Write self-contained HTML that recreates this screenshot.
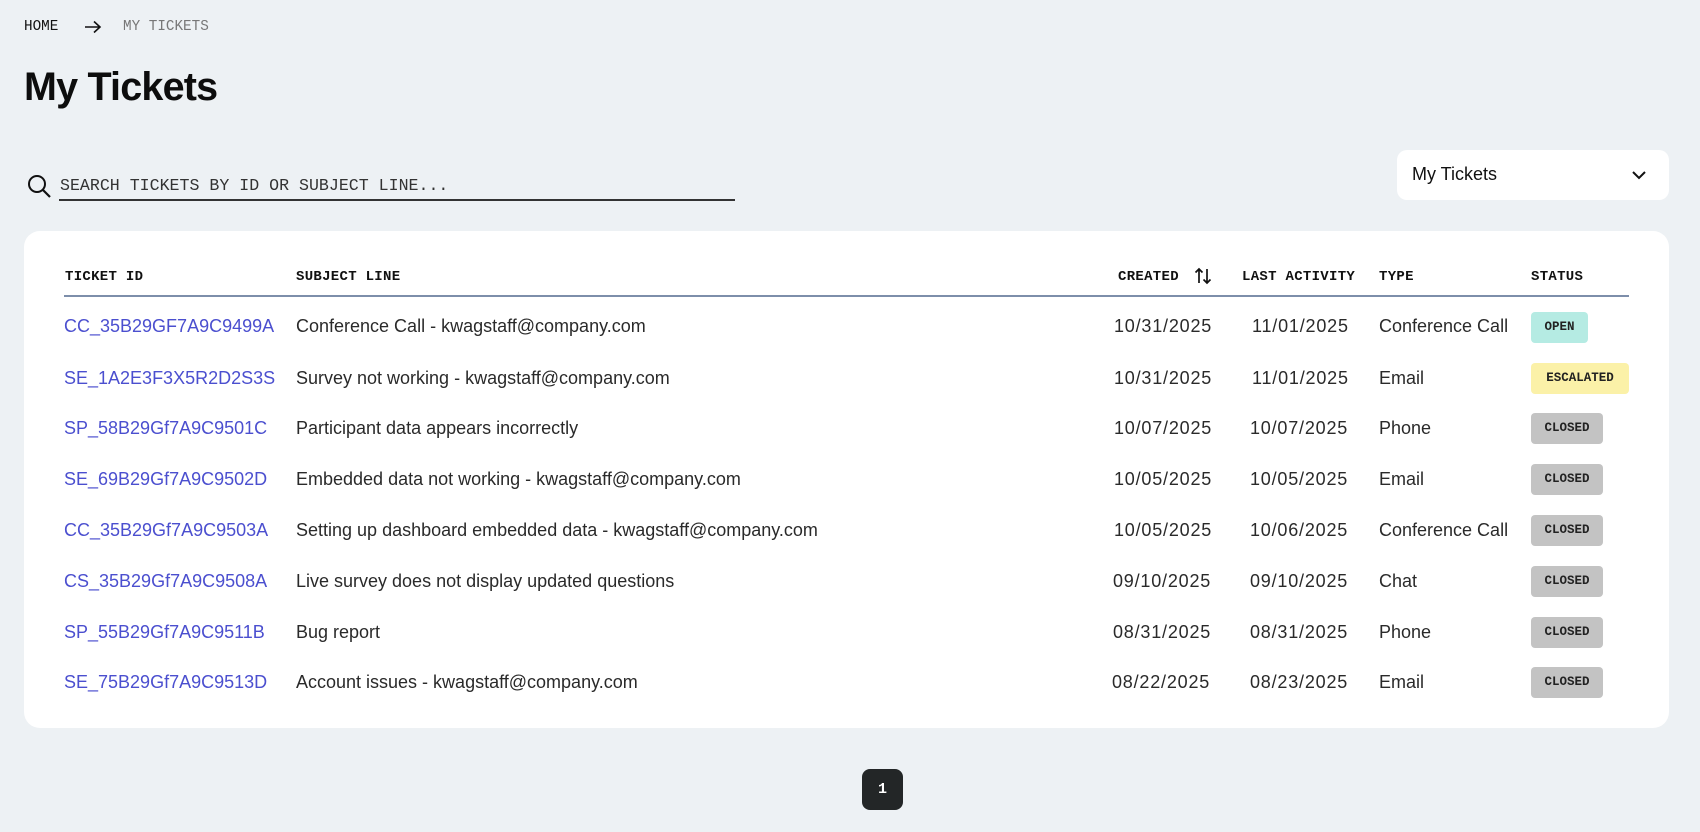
<!DOCTYPE html>
<html><head><meta charset="utf-8"><style>
*{margin:0;padding:0;box-sizing:border-box}
body{width:1700px;height:832px;background:#edf1f4;font-family:"Liberation Sans",sans-serif;color:#222;position:relative;overflow:hidden}
.a{position:absolute;white-space:nowrap}
.mono{font-family:"Liberation Mono",monospace}
.bc{top:19px;font-size:14.3px}
h1{position:absolute;left:24px;top:65px;font-size:39.5px;font-weight:bold;letter-spacing:-0.8px;color:#0d0d0d}
.card{position:absolute;left:24px;top:231px;width:1645px;height:497px;background:#fff;border-radius:16px}
.hd{top:269px;font-family:"Liberation Mono",monospace;font-weight:bold;font-size:14px;color:#111;letter-spacing:.3px}
.line{position:absolute;left:64px;top:295px;width:1565px;height:2px;background:#7d8eaa}
.r{font-size:18px;color:#2a2a2a}
.d{letter-spacing:0.8px}
.id{color:#4b4fcf}
.b{position:absolute;left:1531px;height:31px;border-radius:4px;font-family:"Liberation Mono",monospace;font-weight:bold;font-size:12.5px;line-height:31px;text-align:center;color:#222}
.dd{position:absolute;left:1397px;top:150px;width:272px;height:50px;background:#fff;border-radius:10px}
</style></head><body>
<div class="a mono bc" style="left:24px;color:#111">HOME</div>
<svg class="a" style="left:84px;top:20px" width="18" height="14" viewBox="0 0 18 14"><path d="M1 7H16M10 1.5L16 7L10 12.5" fill="none" stroke="#111" stroke-width="1.6"/></svg>
<div class="a mono bc" style="left:123px;color:#777">MY TICKETS</div>
<h1>My Tickets</h1>
<svg class="a" style="left:27px;top:174px" width="25" height="25" viewBox="0 0 25 25"><circle cx="10" cy="10" r="8" fill="none" stroke="#111" stroke-width="2"/><path d="M16 16L23 23" stroke="#111" stroke-width="2.2"/></svg>
<div class="a mono" style="left:60px;top:176px;font-size:16.6px;color:#333">SEARCH TICKETS BY ID OR SUBJECT LINE...</div>
<div class="a" style="left:59px;top:199px;width:676px;height:2px;background:#333"></div>
<div class="dd"></div>
<div class="a" style="left:1412px;top:164px;font-size:18px;color:#111">My Tickets</div>
<svg class="a" style="left:1631px;top:170px" width="16" height="10" viewBox="0 0 16 10"><path d="M2 2L8 8L14 2" fill="none" stroke="#111" stroke-width="2"/></svg>
<div class="card"></div>
<div class="a hd" style="left:65px">TICKET ID</div>
<div class="a hd" style="left:296px">SUBJECT LINE</div>
<div class="a hd" style="left:1118px">CREATED</div>
<svg class="a" style="left:1194px;top:267px" width="18" height="18" viewBox="0 0 18 18"><path d="M5 16V2M1.5 5.5L5 2L8.5 5.5M13 2V16M9.5 12.5L13 16L16.5 12.5" fill="none" stroke="#111" stroke-width="1.7"/></svg>
<div class="a hd" style="left:1242px">LAST ACTIVITY</div>
<div class="a hd" style="left:1379px">TYPE</div>
<div class="a hd" style="left:1531px">STATUS</div>
<div class="line"></div>

<div class="a r id" style="left:64px;top:316px">CC_35B29GF7A9C9499A</div>
<div class="a r" style="left:296px;top:316px">Conference Call - kwagstaff@company.com</div>
<div class="a r d" style="left:1114px;top:316px">10/31/2025</div>
<div class="a r d" style="left:1252px;top:316px">11/01/2025</div>
<div class="a r" style="left:1379px;top:316px">Conference Call</div>
<div class="b" style="top:312px;width:57px;background:#b5ebe3">OPEN</div>

<div class="a r id" style="left:64px;top:368px">SE_1A2E3F3X5R2D2S3S</div>
<div class="a r" style="left:296px;top:368px">Survey not working - kwagstaff@company.com</div>
<div class="a r d" style="left:1114px;top:368px">10/31/2025</div>
<div class="a r d" style="left:1252px;top:368px">11/01/2025</div>
<div class="a r" style="left:1379px;top:368px">Email</div>
<div class="b" style="top:363px;width:98px;background:#fbf1a8">ESCALATED</div>

<div class="a r id" style="left:64px;top:418px">SP_58B29Gf7A9C9501C</div>
<div class="a r" style="left:296px;top:418px">Participant data appears incorrectly</div>
<div class="a r d" style="left:1114px;top:418px">10/07/2025</div>
<div class="a r d" style="left:1250px;top:418px">10/07/2025</div>
<div class="a r" style="left:1379px;top:418px">Phone</div>
<div class="b" style="top:413px;width:72px;background:#c3c3c3">CLOSED</div>

<div class="a r id" style="left:64px;top:469px">SE_69B29Gf7A9C9502D</div>
<div class="a r" style="left:296px;top:469px">Embedded data not working - kwagstaff@company.com</div>
<div class="a r d" style="left:1114px;top:469px">10/05/2025</div>
<div class="a r d" style="left:1250px;top:469px">10/05/2025</div>
<div class="a r" style="left:1379px;top:469px">Email</div>
<div class="b" style="top:464px;width:72px;background:#c3c3c3">CLOSED</div>

<div class="a r id" style="left:64px;top:520px">CC_35B29Gf7A9C9503A</div>
<div class="a r" style="left:296px;top:520px">Setting up dashboard embedded data - kwagstaff@company.com</div>
<div class="a r d" style="left:1114px;top:520px">10/05/2025</div>
<div class="a r d" style="left:1250px;top:520px">10/06/2025</div>
<div class="a r" style="left:1379px;top:520px">Conference Call</div>
<div class="b" style="top:515px;width:72px;background:#c3c3c3">CLOSED</div>

<div class="a r id" style="left:64px;top:571px">CS_35B29Gf7A9C9508A</div>
<div class="a r" style="left:296px;top:571px">Live survey does not display updated questions</div>
<div class="a r d" style="left:1113px;top:571px">09/10/2025</div>
<div class="a r d" style="left:1250px;top:571px">09/10/2025</div>
<div class="a r" style="left:1379px;top:571px">Chat</div>
<div class="b" style="top:566px;width:72px;background:#c3c3c3">CLOSED</div>

<div class="a r id" style="left:64px;top:622px">SP_55B29Gf7A9C9511B</div>
<div class="a r" style="left:296px;top:622px">Bug report</div>
<div class="a r d" style="left:1113px;top:622px">08/31/2025</div>
<div class="a r d" style="left:1250px;top:622px">08/31/2025</div>
<div class="a r" style="left:1379px;top:622px">Phone</div>
<div class="b" style="top:617px;width:72px;background:#c3c3c3">CLOSED</div>

<div class="a r id" style="left:64px;top:672px">SE_75B29Gf7A9C9513D</div>
<div class="a r" style="left:296px;top:672px">Account issues - kwagstaff@company.com</div>
<div class="a r d" style="left:1112px;top:672px">08/22/2025</div>
<div class="a r d" style="left:1250px;top:672px">08/23/2025</div>
<div class="a r" style="left:1379px;top:672px">Email</div>
<div class="b" style="top:667px;width:72px;background:#c3c3c3">CLOSED</div>

<div class="a" style="left:862px;top:769px;width:41px;height:41px;background:#232627;border-radius:8px;color:#fff;font-family:'Liberation Mono',monospace;font-weight:bold;font-size:15px;line-height:41px;text-align:center">1</div>
</body></html>
